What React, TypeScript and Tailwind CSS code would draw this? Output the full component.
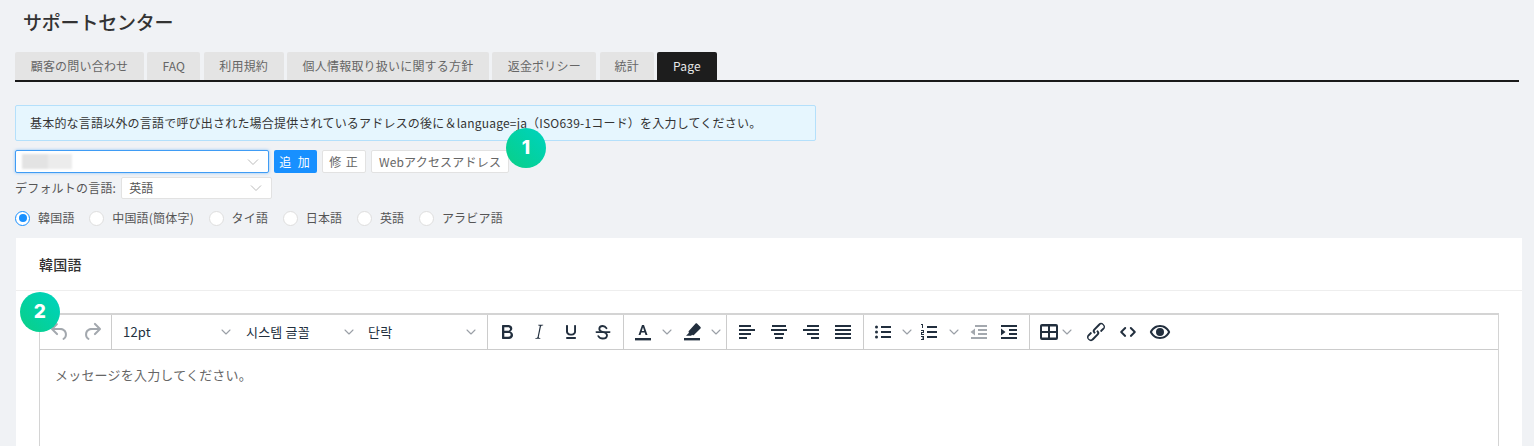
import React from "react";
import { ChevronDown } from "lucide-react";

const tabs = [
  { t: "顧客の問い合わせ", w: "w-[129px]" },
  { t: "FAQ", w: "w-[53px]" },
  { t: "利用規約", w: "w-[80px]" },
  { t: "個人情報取り扱いに関する方針", w: "w-[202px]" },
  { t: "返金ポリシー", w: "w-[104px]" },
  { t: "統計", w: "w-[54px]" },
];
const langs = ["中国語(簡体字)", "タイ語", "日本語", "英語", "アラビア語"];

function Chev({ className = "" }: { className?: string }) {
  return (
    <svg viewBox="0 0 12 12" className={"w-[12px] h-[12px] " + className} fill="none" stroke="currentColor" strokeWidth="1">
      <path d="M1 3.5 L6 8.5 L11 3.5" />
    </svg>
  );
}
function TChev() {
  return <ChevronDown size={16} strokeWidth={1.6} className="text-[#9a9fa6] shrink-0" />;
}
function I({ children, cls = "text-[#222f3e]", w = "w-[32px]" }: { children: React.ReactNode; cls?: string; w?: string }) {
  return (
    <span className={`${w} h-[24px] flex items-center justify-center ${cls}`}>
      <svg width="24" height="24" viewBox="0 0 24 24" fill="currentColor">{children}</svg>
    </span>
  );
}
function Sep() {
  return <span className="w-px h-full bg-[#cccccc] shrink-0" />;
}

export default function App() {
  return (
    <div className="h-[446px] overflow-hidden bg-[#f0f2f5] text-[#555] font-['Noto_Sans_CJK_JP','Noto_Sans',sans-serif] text-[12px] tracking-[0.2px]">
      <div className="pt-[9px] pl-[23px] h-[52px]">
        <h1 className="text-[19px] leading-[26px] font-medium tracking-[-0.2px] text-[#333]">サポートセンター</h1>
      </div>
      <div className="mx-[15px] flex gap-[3.33px] border-b-2 border-[#1a1a1a] h-[30px]">
        {tabs.map((x) => (
          <div key={x.t} className={`${x.w} h-[28px] bg-[#e4e4e4] text-[#666] flex items-center justify-center rounded-t-[2px]`}>
            {x.t}
          </div>
        ))}
        <div className="w-[60px] h-[28px] bg-[#1d1d1d] text-[#e8e8e8] flex items-center justify-center rounded-t-[2px]">Page</div>
      </div>

      <div className="relative mt-[23px] ml-[15px] w-[801px] h-[36px] border border-[#b4e0fb] bg-[#e6f6fe] text-[#333] pl-[14px] flex items-center rounded-[2px]">
        基本的な言語以外の言語で呼び出された場合提供されているアドレスの後に＆language=ja（ISO639-1コード）を入力してください。
      </div>

      <div className="relative mt-[9px] ml-[15px] flex items-center h-[23px]">
        <div className="w-[254px] h-[23px] bg-white border border-[#3f9cf5] rounded-[2px] shadow-[0_0_3px_rgba(24,144,255,0.5)] flex items-center justify-between pl-[6px] pr-[9px]">
          <span className="flex blur-[1px]">
            <span className="w-[26px] h-[15px] bg-[#e3e3e3]" />
            <span className="w-[24px] h-[15px] bg-[#ececec]" />
          </span>
          <Chev className="text-[#bbb]" />
        </div>
        <button className="ml-[5px] w-[43px] h-[23px] bg-[#1890ff] text-white rounded-[2px] tracking-[2px]">追 加</button>
        <button className="ml-[5px] w-[44px] h-[23px] bg-white border border-[#e2e2e2] text-[#666] rounded-[2px] tracking-[1px]">修 正</button>
        <button className="ml-[5px] w-[138px] h-[23px] bg-white border border-[#e2e2e2] text-[#666] rounded-[2px]">Webアクセスアドレス</button>
        <span className="absolute left-[491px] top-[-22px] w-[40px] h-[40px] rounded-full bg-gradient-to-tr from-[#0ccf85] to-[#00d3c0] text-white text-[19px] font-extrabold font-['Inter',sans-serif] flex items-center justify-center">1</span>
      </div>

      <div className="mt-[4px] ml-[15px] flex items-center h-[22px]">
        <span>デフォルトの言語:</span>
        <div className="ml-[5px] w-[151px] h-[22px] bg-white border border-[#e2e2e2] rounded-[2px] flex items-center justify-between pl-[7px] pr-[9px]">
          <span>英語</span>
          <Chev className="text-[#bbb]" />
        </div>
      </div>

      <div className="mt-[11px] ml-[15px] flex items-center h-[16px]">
        <span className="w-[15px] h-[15px] rounded-full border border-[#1890ff] bg-white flex items-center justify-center">
          <span className="w-[8px] h-[8px] rounded-full bg-[#1890ff]" />
        </span>
        <span className="ml-[8px]">韓国語</span>
        {langs.map((l) => (
          <React.Fragment key={l}>
            <span className="ml-[14.6px] w-[15px] h-[15px] rounded-full border border-[#dedede] bg-white" />
            <span className="ml-[8px]">{l}</span>
          </React.Fragment>
        ))}
      </div>

      <div className="mt-[12px] ml-[16px] w-[1506px] h-[208px] bg-white">
        <div className="h-[53px] border-b border-[#eeeeee] pl-[23px] flex items-center text-[14px] font-medium text-[#333]">韓国語</div>
        <div className="relative mt-[22px] mx-[23px] h-[150px] border-x border-t-2 border-[#d4d4d4]">
          <span className="absolute left-[-20px] top-[-23px] z-10 w-[40px] h-[40px] rounded-full bg-gradient-to-tr from-[#0ccf85] to-[#00d3c0] text-white text-[19px] font-extrabold font-['Inter',sans-serif] flex items-center justify-center">2</span>
          <div className="h-[35px] border-b border-[#cccccc] flex items-center text-[#222f3e] text-[13px]">
            <div className="w-[71px] h-full flex items-center pl-[4px]">
              <I cls="text-[#a3a8ae]"><path d="M6.4 8H12c3.7 0 6.2 2 6.8 5.1.6 2.7-.4 5.6-2.8 6.7a1 1 0 0 1-.9-1.8c1.5-.7 2.1-2.7 1.7-4.5-.4-2.2-2.1-3.5-4.8-3.5H6.4l3.3 3.3a1 1 0 1 1-1.4 1.4l-5-5a1 1 0 0 1 0-1.4l5-5a1 1 0 0 1 1.4 1.4L6.4 8Z" /></I>
              <I cls="text-[#a3a8ae]"><path d="M17.6 10H12c-2.7 0-4.4 1.3-4.8 3.5-.4 1.8.2 3.8 1.7 4.5a1 1 0 0 1-.9 1.8c-2.4-1.1-3.4-4-2.8-6.7C5.8 10 8.3 8 12 8h5.6l-3.3-3.3a1 1 0 1 1 1.4-1.4l5 5a1 1 0 0 1 0 1.4l-5 5a1 1 0 1 1-1.4-1.4l3.3-3.3Z" /></I>
            </div>
            <Sep />
            <div className="w-[122px] pl-[11px] flex items-center justify-between"><span>12pt</span><TChev /></div>
            <div className="w-[123px] pl-[12px] flex items-center justify-between font-['Noto_Sans_CJK_KR',sans-serif]"><span>시스템 글꼴</span><TChev /></div>
            <div className="w-[130px] pl-[11px] pr-[8px] flex items-center justify-between font-['Noto_Sans_CJK_KR',sans-serif]"><span>단락</span><TChev /></div>
            <Sep />
            <div className="w-[135px] h-full flex items-center pl-[3px]">
              <I><path d="M7.8 19c-.3 0-.5 0-.6-.2l-.2-.5V5.700c0-.2 0-.4.2-.5l.5-.2h5c1.500 0 2.700.3 3.500 1 .7.600 1.100 1.400 1.100 2.500a3 3 0 0 1-.6 1.800c-.4.600-1 1-1.600 1.200.9.200 1.600.6 2 1.200.6.500.9 1.300.9 2.300 0 1.300-.4 2.300-1.300 2.900-.8.700-2 1-3.800 1H7.800Zm5-8.300c.6 0 1.200-.1 1.600-.5.4-.3.6-.7.6-1.300 0-1.100-.8-1.700-2.300-1.700H9.300v3.500h3.400Zm.5 6c.7 0 1.300-.1 1.700-.4.4-.4.6-.8.6-1.500s-.2-1.200-.6-1.500c-.4-.3-1-.4-1.700-.4H9.300v3.800h4Z" /></I>
              <I><path d="m16.200 4.700-.1.7h-.3c-.6 0-1 0-1.300.3-.3.3-.5.600-.6 1.100l-2.100 9.900v.5c0 .5.400.8 1.400.8h.2l-.2.7H8.300l.2-.7h.2c1.100 0 1.800-.5 2-1.500l2-9.900.1-.4c0-.6-.4-.8-1.400-.8h-.3l.2-.7h4.900Z" /></I>
              <I><path d="M16 5c.6 0 1 .4 1 1v5.500a4 4 0 0 1-.4 1.800l-.2.3a4 4 0 0 1-.3.4 5 5 0 0 1-3.700 1.500h-.8a5 5 0 0 1-3.700-1.500l-.3-.4a4 4 0 0 1-.6-2.100V6c0-.6.4-1 1-1s1 .4 1 1v5.500c0 .3.1.6.3 1l.2.2a3 3 0 0 0 2.200 1h.8a3 3 0 0 0 2.200-1l.1-.2c.2-.4.3-.7.3-1V6c0-.6.4-1 1-1ZM8 17h8c.6 0 1 .4 1 1s-.4 1-1 1H8a1 1 0 0 1 0-2Z" /></I>
              <I>
                <path d="M15.500 8.200C14.700 7 13.500 6 11.800 6 9.700 6 8.300 7.300 8.300 9c0 1.400 1 2.200 3.700 3 2.700.7 4 1.600 4 3.200 0 1.800-1.700 3.300-4.200 3.300-2 0-3.600-.9-4.500-2.400" fill="none" stroke="currentColor" strokeWidth="1.800" strokeLinecap="round" />
                <rect x="4.500" y="11.200" width="15" height="1.700" rx="0.800" />
              </I>
            </div>
            <Sep />
            <div className="w-[102px] h-full flex items-center pl-[5px]">
              <span className="w-[28px] flex justify-center"><svg width="24" height="24" viewBox="0 0 24 24" fill="currentColor"><rect x="4" y="18" width="16" height="2.4" /><path d="M11 5h2l3.500 10h-2l-.8-2.500h-3.400L9.500 15h-2L11 5Zm-.2 6h2.400L12 7.200 10.800 11Z" /></svg></span>
              <span className="w-[18px] ml-[1px] flex justify-center"><TChev /></span>
              <span className="w-[28px] ml-[2px] flex justify-center"><svg width="24" height="24" viewBox="0 0 24 24" fill="currentColor"><rect x="4" y="18" width="16" height="2.4" /><path d="M17 3.500 20.500 7c.4.400.4 1 0 1.400l-6.600 6.600c-.4.400-1 .4-1.400 0l-.4-.3-1 1H6l3-3-.2-.3c-.4-.4-.4-1 0-1.400L15.600 3.500c.4-.4 1-.4 1.400 0Z" /></svg></span>
              <span className="w-[18px] ml-[1px] flex justify-center"><TChev /></span>
            </div>
            <Sep />
            <div className="w-[136px] h-full flex items-center pl-[4px]">
              <I><path d="M4 5h12v2H4V5Zm0 4h16v2H4V9Zm0 4h12v2H4v-2Zm0 4h8v2H4v-2Z" /></I>
              <I><path d="M5 5h14v2H5V5Zm-1 4h16v2H4V9Zm3 4h10v2H7v-2Zm1 4h8v2H8v-2Z" /></I>
              <I><path d="M8 5h12v2H8V5ZM4 9h16v2H4V9Zm4 4h12v2H8v-2Zm4 4h8v2h-8v-2Z" /></I>
              <I><path d="M4 5h16v2H4V5Zm0 4h16v2H4V9Zm0 4h16v2H4v-2Zm0 4h16v2H4v-2Z" /></I>
            </div>
            <Sep />
            <div className="w-[165px] h-full flex items-center pl-[7px]">
              <span className="w-[24px] flex justify-center"><svg width="24" height="24" viewBox="0 0 24 24" fill="currentColor"><path d="M10 6h10v2H10V6Zm0 5h10v2H10v-2Zm0 5h10v2H10v-2Z" /><circle cx="5.500" cy="7" r="1.500" /><circle cx="5.500" cy="12" r="1.500" /><circle cx="5.500" cy="17" r="1.500" /></svg></span>
              <span className="w-[18px] ml-[3px] flex justify-center"><TChev /></span>
              <span className="w-[24px] ml-[1px] flex justify-center"><svg width="24" height="24" viewBox="0 0 24 24" fill="currentColor"><path d="M10 6h10v2H10V6Zm0 5h10v2H10v-2Zm0 5h10v2H10v-2Z" /><path d="M5 4h1v4H5V5H4V4h1Zm-1 6h3v3H5v1h2v1H4v-3h2v-1H4v-1Zm0 6h3v4H4v-1h2v-.5H5v-1h1V17H4v-1Z" /></svg></span>
              <span className="w-[18px] ml-[4px] flex justify-center"><TChev /></span>
              <I cls="text-[#a3a8ae]" w="w-[31px]"><path d="M8 5h12v2H8V5ZM11 9h9v2h-9V9Zm0 4h9v2h-9v-2ZM4 17h16v2H4v-2ZM8 8.500v7L3.500 12 8 8.500Z" /></I>
              <I w="w-[30px]"><path d="M4 5h16v2H4V5ZM12 9h8v2h-8V9Zm0 4h8v2h-8v-2ZM4 17h16v2H4v-2ZM4 8.500v7L8.500 12 4 8.500Z" /></I>
            </div>
            <Sep />
            <div className="flex items-center h-full pl-[7px]">
              <span className="w-[24px] flex justify-center"><svg width="24" height="24" viewBox="0 0 24 24" fill="currentColor"><path fillRule="evenodd" d="M5 4h14a2 2 0 0 1 2 2v12a2 2 0 0 1-2 2H5a2 2 0 0 1-2-2V6c0-1.100.9-2 2-2Zm0 2.500V11h6V6.500H5Zm8 0V11h6V6.500h-6ZM5 13v4.500h6V13H5Zm8 0v4.500h6V13h-6Z" /></svg></span>
              <span className="w-[12px] flex justify-center"><TChev /></span>
              <I w="w-[32px] ml-[7px]"><path d="M6.200 12.300a1 1 0 0 1 1.400 1.400l-2 2a2 2 0 1 0 2.600 2.800l4.800-4.800a1 1 0 0 0 0-1.400 1 1 0 1 1 1.400-1.300 2.900 2.900 0 0 1 0 4L9.600 20a3.900 3.900 0 0 1-5.500-5.500l2-2Zm11.600-.6a1 1 0 0 1-1.400-1.400l2.100-2a2 2 0 1 0-2.700-2.800L11 10.300a1 1 0 0 0 0 1.400A1 1 0 1 1 9.600 13a2.900 2.900 0 0 1 0-4L14.400 4a3.900 3.900 0 0 1 5.500 5.500l-2 2Z" /></I>
              <I w="w-[32px]"><path d="M9.900 7.300a1 1 0 0 1 0 1.400L6.600 12l3.300 3.300a1 1 0 0 1-1.400 1.400l-4-4a1 1 0 0 1 0-1.400l4-4a1 1 0 0 1 1.400 0Zm4.200 0a1 1 0 0 1 1.400 0l4 4a1 1 0 0 1 0 1.400l-4 4a1 1 0 0 1-1.400-1.400l3.300-3.300-3.300-3.300a1 1 0 0 1 0-1.400Z" /></I>
              <I w="w-[32px]"><path fillRule="evenodd" d="M12 5c4.600 0 8.600 2.800 10.200 7-1.600 4.200-5.600 7-10.200 7s-8.600-2.800-10.200-7C3.400 7.800 7.400 5 12 5Zm0 2c-3.500 0-6.600 2-8 5 1.400 3 4.500 5 8 5s6.600-2 8-5c-1.400-3-4.500-5-8-5Zm0 1a4 4 0 1 1 0 8 4 4 0 0 1 0-8Z" /></I>
            </div>
          </div>
          <div className="pl-[15px] pt-[15px] text-[13px] text-[#666]">メッセージを入力してください。</div>
        </div>
      </div>
    </div>
  );
}
